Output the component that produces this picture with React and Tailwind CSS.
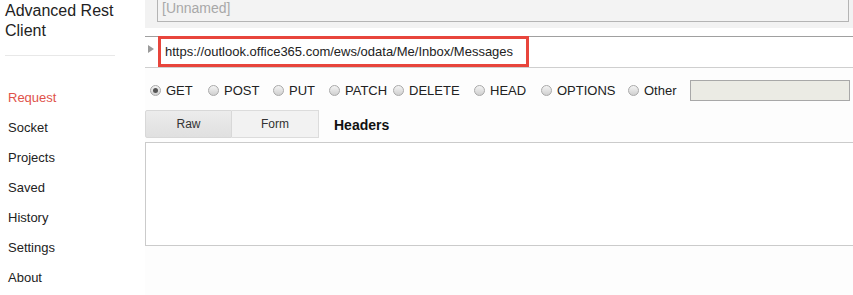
import React from 'react';

const navItems = ['Request', 'Socket', 'Projects', 'Saved', 'History', 'Settings', 'About'];

const methods = [
    { label: 'GET', w: 'w-[58px]', checked: true },
    { label: 'POST', w: 'w-[65px]' },
    { label: 'PUT', w: 'w-[56px]' },
    { label: 'PATCH', w: 'w-[64px]' },
    { label: 'DELETE', w: 'w-[81px]' },
    { label: 'HEAD', w: 'w-[67px]' },
    { label: 'OPTIONS', w: 'w-[87px]' },
    { label: 'Other', w: 'w-[62px]' },
];

const Radio = ({ checked }) => (
    <span className="w-[11px] h-[11px] rounded-full border border-[#a9a9a9] bg-gradient-to-b from-[#f4f4f4] to-[#d0d0d0] flex items-center justify-center shrink-0">
        {checked && <span className="w-[5px] h-[5px] rounded-full bg-[#555]" />}
    </span>
);

const App = () => {
    return (
        <div className="flex w-full h-[295px] bg-white text-[#222] overflow-hidden" style={{ fontFamily: '"Liberation Sans", Arial, sans-serif' }}>
            {/* sidebar */}
            <div className="w-[145px] shrink-0 bg-white">
                <h1 className="pl-[5px] pt-[1px] text-[16px] leading-[20px] text-[#222]">Advanced Rest Client</h1>
                <div className="ml-[5px] w-[110px] mt-[14px] border-t border-[#e8e8e8]" />
                <ul className="mt-[32px] pl-[8px]">
                    {navItems.map((item) => (
                        <li key={item} className={`h-[30px] text-[13px] leading-[20px] ${item === 'Request' ? 'text-[#e0524a]' : 'text-[#222]'}`}>
                            {item}
                        </li>
                    ))}
                </ul>
            </div>

            {/* main */}
            <div className="flex-1 flex flex-col bg-[#fdfdfd]">
                <div className="h-[28px] bg-[#f2f2f2] pl-[12px] pr-[4px] overflow-hidden">
                    <div className="-mt-[8px] h-[30px] border border-[#b4b4b4] bg-[#f3f3f3] pl-[4px] flex items-end pb-[2px] text-[14px] text-[#a8a8a8]">
                        [Unnamed]
                    </div>
                </div>
                <div className="h-[8px] bg-white" />
                <div className="h-[32px] bg-white border-t border-[#a0a0a0] border-b border-b-[#cfcfcf] flex items-start relative">
                    <span className="mt-[8px] ml-[3px] w-0 h-0 border-y-[4px] border-y-transparent border-l-[6px] border-l-[#9a9a9a]" />
                    <div className="-mt-[1px] ml-[4px] w-[371px] h-[31px] border-[3px] border-[#e8453c] flex items-center pl-[4px] text-[13px] text-[#222]">
                        https://outlook.office365.com/ews/odata/Me/Inbox/Messages
                    </div>
                </div>
                <div className="h-[42px] flex items-center pl-[5px] pt-[3px]">
                    {methods.map((m) => (
                        <label key={m.label} className={`${m.w} shrink-0 flex items-center gap-[5px] text-[13px]`}>
                            <Radio checked={m.checked} />
                            <span>{m.label}</span>
                        </label>
                    ))}
                    <div className="w-[160px] h-[21px] border border-[#a8a8a8] bg-[#ebebe4]" />
                </div>
                <div className="flex items-center h-[28px]">
                    <div className="w-[87px] h-[28px] border border-[#d8d8d8] bg-gradient-to-b from-[#ececec] to-[#e0e0e0] rounded-l-[2px] flex items-center justify-center text-[12px] text-[#333]">
                        Raw
                    </div>
                    <div className="w-[87px] h-[28px] border border-l-0 border-[#dcdcdc] bg-[#f2f2f2] flex items-center justify-center text-[12px] text-[#333]">
                        Form
                    </div>
                    <span className="ml-[15px] mt-[2px] text-[14px] font-bold text-[#111]">Headers</span>
                </div>
                <div className="mt-[4px] h-[104px] border border-r-0 border-[#cbcbcb] bg-white" />
            </div>
        </div>
    );
};

export default App;
